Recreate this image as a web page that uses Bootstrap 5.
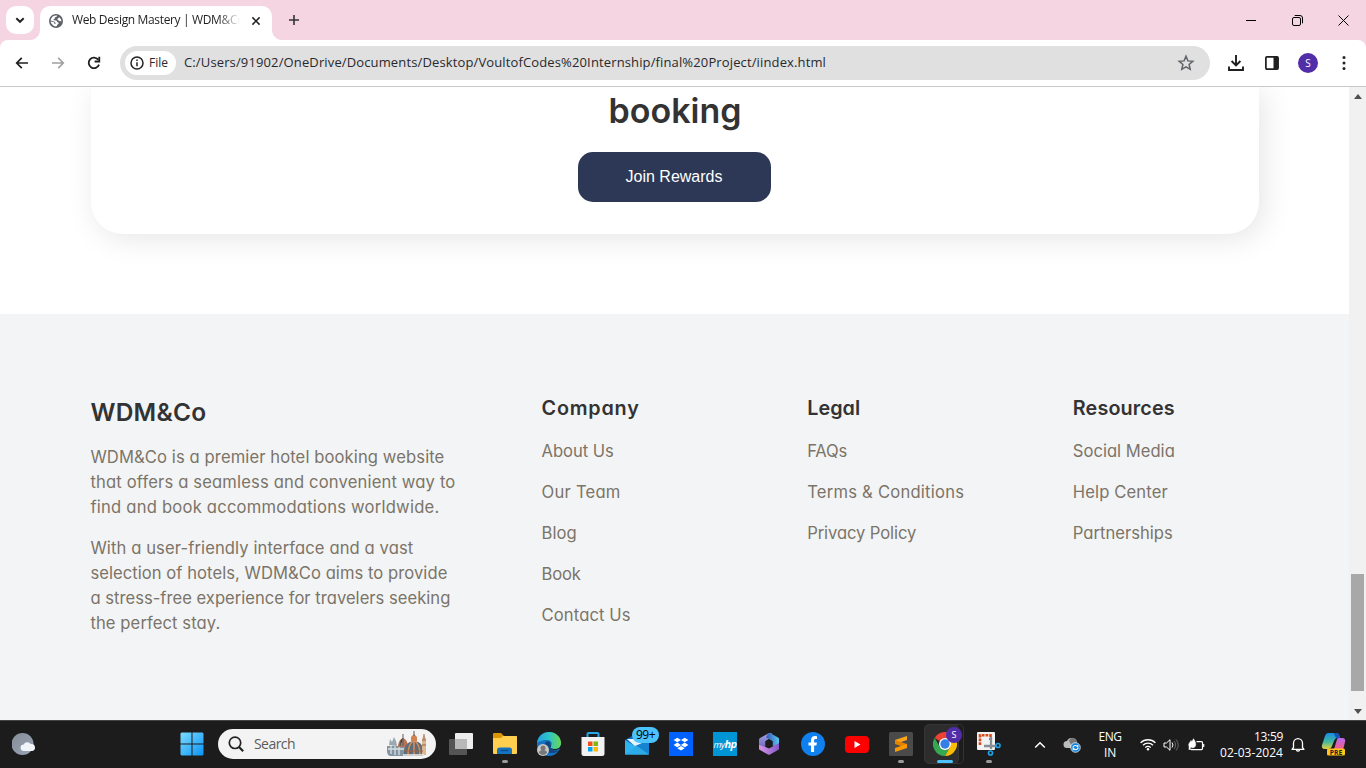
<!DOCTYPE html>
<html lang="en">
<head>
<meta charset="utf-8">
<title>Web Design Mastery | WDM&amp;Co</title>
<link href="https://cdn.jsdelivr.net/npm/bootstrap@5.3.0/dist/css/bootstrap.min.css" rel="stylesheet">
<style>
  body { width: 1366px; height: 768px; overflow: hidden; background: #fff; color: #1f1f1f; font-family: "Open Sans", "Noto Sans", sans-serif; font-size: 12px; line-height: 1.2; }
  svg { display: block; flex: none; }
  [data-w] { display: inline-block; white-space: nowrap; }

  /* browser chrome */
  .tabstrip { height: 40px; background: #f6d5e3; padding-left: 6px; }
  .tab-search { width: 28px; height: 28px; border-radius: 10px; margin-top: 6px; }
  .browser-tab { position: relative; width: 232px; height: 34px; margin: 6px 0 0 6px; border-radius: 10px 10px 0 0; padding: 0 11px 5px 9px; }
  .browser-tab::before, .browser-tab::after { content: ""; position: absolute; bottom: 0; width: 10px; height: 10px; }
  .browser-tab::before { left: -10px; background: radial-gradient(circle at 0 0, transparent 9.5px, #fff 10.5px); }
  .browser-tab::after { right: -10px; background: radial-gradient(circle at 100% 0, transparent 9.5px, #fff 10.5px); }
  .tab-title { width: 174px; margin-left: 9px; -webkit-mask-image: linear-gradient(90deg, #000 146px, transparent 168px); mask-image: linear-gradient(90deg, #000 146px, transparent 168px); }
  .win-btn { width: 46px; }
  .toolbar-wrap { background: #f6d5e3; }
  .toolbar { height: 47px; border-radius: 8px 8px 0 0; border-bottom: 1px solid #c9c9c9; }
  .tool { width: 36px; height: 46px; }
  .omnibox { height: 34px; width: 1090px; background: #e0e0e0; border-radius: 17px; padding: 0 15px 0 5px; font-size: 13px; color: #28292c; }
  .file-chip { width: 51px; height: 24px; border-radius: 12px; padding-left: 5px; font-size: 12px; }
  .chip-label { margin-left: 5px; }
  .avatar { width: 20px; height: 20px; background: #522da8; font-size: 10px; }

  /* page */
  .viewport { height: 633px; }
  .site { width: 1349px; font-family: "Inter", sans-serif; font-feature-settings: "cv11"; font-size: 16.6px; line-height: 25px; color: #7b7468; overflow: hidden; }
  .rewards { width: 1168px; height: 147px; margin: 0 0 80px 91px; border-radius: 0 0 32px 32px; box-shadow: 5px 5px 30px rgba(0,0,0,.1); }
  .rewards h2 { font-size: 34px; line-height: 48px; font-weight: 600; color: #333; margin: 0 0 17px; }
  .btn-rewards { width: 193px; height: 50px; margin-right: 2px; border-radius: 15px; font-family: "Liberation Sans", Arial, sans-serif; font-size: 16px; background: #2c3855; color: #fff; border: 0; }
  .site-footer { height: 406px; background: #f3f4f6; padding: 80px 90.600px 0 90.400px; }
  .footer-cols { grid-template-columns: 2fr 1fr 1fr 1fr; column-gap: 80px; }
  .site-footer h3 { font-size: 24.500px; line-height: 36px; font-weight: 600; color: #333; margin-bottom: 15px; }
  .site-footer h4 { font-size: 19.800px; line-height: 29px; font-weight: 600; color: #333; margin-bottom: 16px; }
  .site-footer p, .site-footer li { margin-bottom: 16px; }
  .scroller { width: 17px; background: #f1f1f1; padding: 7px 0 6px; }
  .thumb { width: 13px; height: 117px; margin-bottom: 18px; background: #a8a8a8; }
  .arrow { width: 0; border: 4px solid transparent; }
  .arrow-up { border-bottom: 5px solid #505050; border-top: 0; }
  .arrow-down { border-top: 5px solid #505050; border-bottom: 0; }

  /* taskbar */
  .taskbar { height: 48px; background: #1c1c1c; border-top: 1px solid #444; color: #fff; }
  .app { position: relative; width: 44px; height: 47px; padding-bottom: 1px; }
  .search-box { width: 218px; height: 30px; margin: 0 3px 1px 4px; border-radius: 15px; background: #f3f3f3; color: #5c5c5c; font-size: 14px; padding: 0 8px 0 10px; }
  .running::after { content: ""; position: absolute; bottom: 5px; left: 19px; width: 6px; height: 3px; border-radius: 2px; background: #9a9a9a; }
  .active-app::before { content: ""; position: absolute; left: 1px; top: 3px; width: 35px; height: 40px; border-radius: 5px; background: #2d2d2d; border: 1px solid #363636; box-shadow: 5px 0 0 -1px #1c1c1c, 5px 0 0 0 #333; }
  .active-app::after { width: 16px; left: 14px; background: #4cc2ff; }
  .active-app svg { position: relative; }
  .mail-count { position: absolute; left: 17px; top: 6px; width: 27px; height: 16px; border-radius: 8px; background: #4cc2ff; color: #000; font-size: 12px; }
  .profile-dot { position: absolute; left: 23px; top: 6px; width: 16px; height: 16px; border-radius: 50%; background: #522da8; font-size: 9px; }
  .hp-tile { width: 24px; height: 24px; background: #0096d6; font-size: 9px; font-style: italic; letter-spacing: -.5px; }
  .hp-tile b { font-size: 11px; }
  .clock { width: 66px; line-height: 16px; font-size: 12px; }
</style>
</head>
<body class="d-flex flex-column">

<header>
  <div class="tabstrip d-flex">
    <div class="tab-search bg-white d-flex align-items-center justify-content-center">
      <svg width="10" height="8" viewBox="0 0 10 8" fill="none" stroke="#222" stroke-width="1.900"><path d="M1.300 2.200 5 5.800 8.700 2.200"/></svg>
    </div>
    <div class="browser-tab bg-white d-flex align-items-center">
      <svg width="14" height="14" viewBox="0 0 14 14"><circle cx="7" cy="7" r="7" fill="#5f6368"/><path d="M8 1.600c.2 1-.4 1.400-1.300 1.500-1 .1-1 .8-.9 1.400.1.700-1.200.5-1.300 1.300 0 .7.900.5 2.200.6 1.200.1 1.300 1 1.500 1.600.3.700 1.600.3 1.500 1.200-.1 1-1.300.9-1.500 1.700-.1.700-.6 1.500-1.500 1.500C4.600 12.300 2 10 1.600 7.500l2.700.6c1 .2 1.100 1 1 1.600l1.200.3V8.800c-.8-.2-.7-1-1.500-1.200L1.600 6.500C2 3.300 4.500 1.300 8 1.600z" fill="#fff"/><path d="M10 3.200c1.500.8 2.400 2.200 2.400 4-.8.300-1.700.2-2.200-.4-.6-.7-1.900-.6-1.800-1.600.1-.9 1.400-.9 1.600-2z" fill="#fff"/></svg>
      <div class="tab-title"><span data-w="172">Web Design Mastery | WDM&amp;Co</span></div>
      <svg class="ms-auto" width="10" height="10" viewBox="0 0 10 10" stroke="#222" stroke-width="1.500"><path d="M1.400 1.400 8.600 8.600M8.600 1.400 1.400 8.600"/></svg>
    </div>
    <div class="tool d-flex align-items-center justify-content-center ms-1" style="height:40px">
      <svg width="12" height="12" viewBox="0 0 12 12" stroke="#333" stroke-width="1.600"><path d="M6 1v10M1 6h10"/></svg>
    </div>
    <div class="d-flex align-items-center ms-auto">
      <div class="win-btn d-flex justify-content-center"><svg width="10" height="10" stroke="#000"><path d="M0 5.500h10"/></svg></div>
      <div class="win-btn d-flex justify-content-center"><svg width="11" height="11" viewBox="0 0 11 11" fill="none" stroke="#000"><rect x=".5" y="2.500" width="8" height="8" rx="1.500"/><path d="M2.700.5H8a2.500 2.500 0 0 1 2.500 2.500v5.300"/></svg></div>
      <div class="win-btn d-flex justify-content-center"><svg width="11" height="11" viewBox="0 0 11 11" stroke="#000"><path d="M.5.5l10 10M10.500.5l-10 10"/></svg></div>
    </div>
  </div>

  <div class="toolbar-wrap">
    <div class="toolbar bg-white d-flex align-items-center">
      <div class="d-flex ps-1">
        <div class="tool d-flex align-items-center justify-content-center"><svg width="14" height="12" viewBox="0 0 14 12" fill="none" stroke="#1f1f1f" stroke-width="1.700"><path d="M13 6H2M6.800.9 1.700 6l5.100 5.100"/></svg></div>
        <div class="tool d-flex align-items-center justify-content-center"><svg width="14" height="12" viewBox="0 0 14 12" fill="none" stroke="#a0a0a0" stroke-width="1.600"><path d="M1 6h11M7.200.9 12.300 6l-5.100 5.100"/></svg></div>
        <div class="tool d-flex align-items-center justify-content-center"><svg width="14" height="14" viewBox="0 0 14 14" fill="none" stroke="#1f1f1f" stroke-width="1.800"><path d="M12 8.600A5.300 5.300 0 1 1 11.200 3.600M12.300.8v4.700H7.600"/></svg></div>
      </div>
      <div class="omnibox d-flex align-items-center ms-2">
        <div class="file-chip bg-white d-flex align-items-center">
          <svg width="14" height="14" viewBox="0 0 14 14" fill="none" stroke="#222" stroke-width="1.500"><circle cx="7" cy="7" r="6"/><path d="M7 6.200v4M7 3.500v1.500"/></svg>
          <span class="chip-label"><span data-w="19">File</span></span>
        </div>
        <span class="ms-2"><span data-w="642">C:/Users/91902/OneDrive/Documents/Desktop/VoultofCodes%20Internship/final%20Project/iindex.html</span></span>
        <svg class="ms-auto" width="18" height="18" viewBox="0 0 18 18" fill="none" stroke="#5f6368" stroke-width="1.500"><path d="M9 2.300l1.900 4.600 4.900.4-3.700 3.200 1.100 4.800L9 12.800l-4.200 2.500 1.100-4.800-3.700-3.200 4.900-.4z"/></svg>
      </div>
      <div class="d-flex align-items-center ms-2">
        <div class="tool d-flex align-items-center justify-content-center"><svg width="16" height="16" viewBox="0 0 16 16" fill="none" stroke="#1f1f1f" stroke-width="1.900"><path d="M8 0v10M3.600 6 8 10.400 12.400 6M1 11.500V15h14v-3.500"/></svg></div>
        <div class="tool d-flex align-items-center justify-content-center"><svg width="14" height="14" viewBox="0 0 14 14"><rect x=".9" y=".9" width="12.200" height="12.200" rx="1" fill="none" stroke="#1f1f1f" stroke-width="1.700"/><path d="M8.500 1h4.500v12H8.500z" fill="#1f1f1f"/></svg></div>
        <div class="tool d-flex align-items-center justify-content-center"><div class="avatar rounded-circle text-white d-flex align-items-center justify-content-center">S</div></div>
        <div class="tool d-flex align-items-center justify-content-center"><svg width="4" height="14" viewBox="0 0 4 14" fill="#222"><circle cx="2" cy="1.600" r="1.500"/><circle cx="2" cy="7" r="1.500"/><circle cx="2" cy="12.400" r="1.500"/></svg></div>
      </div>
    </div>
  </div>
</header>

<div class="viewport d-flex">
  <main class="site">
    <section class="rewards text-center">
      <h2><span data-w="133">booking</span></h2>
      <button class="btn btn-rewards" type="button"><span data-w="97">Join Rewards</span></button>
    </section>
    <footer class="site-footer">
      <div class="footer-cols d-grid">
        <div>
          <h3><span data-w="116">WDM&amp;Co</span></h3>
          <p><span data-w="354">WDM&amp;Co is a premier hotel booking website</span><br><span data-w="365">that offers a seamless and convenient way to</span><br><span data-w="349">find and book accommodations worldwide.</span></p>
          <p><span data-w="323">With a user-friendly interface and a vast</span><br><span data-w="357">selection of hotels, WDM&amp;Co aims to provide</span><br><span data-w="360">a stress-free experience for travelers seeking</span><br><span data-w="130">the perfect stay.</span></p>
        </div>
        <div>
          <h4><span data-w="98">Company</span></h4>
          <ul class="list-unstyled">
            <li><span data-w="72">About Us</span></li>
            <li><span data-w="79">Our Team</span></li>
            <li><span data-w="35">Blog</span></li>
            <li><span data-w="39">Book</span></li>
            <li><span data-w="89">Contact Us</span></li>
          </ul>
        </div>
        <div>
          <h4><span data-w="53">Legal</span></h4>
          <ul class="list-unstyled">
            <li><span data-w="40">FAQs</span></li>
            <li><span data-w="157">Terms &amp; Conditions</span></li>
            <li><span data-w="109">Privacy Policy</span></li>
          </ul>
        </div>
        <div>
          <h4><span data-w="102">Resources</span></h4>
          <ul class="list-unstyled">
            <li><span data-w="102">Social Media</span></li>
            <li><span data-w="95">Help Center</span></li>
            <li><span data-w="100">Partnerships</span></li>
          </ul>
        </div>
      </div>
    </footer>
  </main>
  <div class="scroller d-flex flex-column align-items-center">
    <div class="arrow arrow-up"></div>
    <div class="thumb mt-auto"></div>
    <div class="arrow arrow-down"></div>
  </div>
</div>

<footer class="taskbar d-flex align-items-center">
  <div class="app d-flex align-items-center ps-2 ms-1">
    <svg width="24" height="24" viewBox="0 0 24 24"><defs><linearGradient id="moon" x2="1" y2="1"><stop stop-color="#858d98"/><stop offset="1" stop-color="#9aa5b4"/></linearGradient></defs><circle cx="10.500" cy="12" r="11" fill="url(#moon)"/><path d="M12 19a3.300 3.300 0 0 1-.3-6.600 4 4 0 0 1 7-.3 3.500 3.500 0 0 1 1.500 6.900z" fill="#f1f5fa"/></svg>
  </div>
  <div class="app d-flex align-items-center justify-content-center" style="margin-left:122px">
    <svg width="24" height="24" viewBox="0 0 24 24"><defs><linearGradient id="win" x2="1" y2="1"><stop stop-color="#7ddcff"/><stop offset="1" stop-color="#0a93f5"/></linearGradient></defs><path fill="url(#win)" d="M1.500.500h10v11h-11v-10zM12.500.500h10l1 1v10h-11zM.5 12.500h11v11h-10l-1-1zM12.500 12.500h11v10l-1 1h-10z"/></svg>
  </div>
  <div class="search-box d-flex align-items-center">
    <svg width="16" height="16" viewBox="0 0 16 16" fill="none" stroke="#222" stroke-width="1.700"><circle cx="7" cy="6.800" r="5.700"/><path d="M11 11l4.200 4.200" stroke-width="2.200"/></svg>
    <span style="margin-left:10px"><span data-w="41">Search</span></span>
    <svg class="ms-auto" width="42" height="26" viewBox="0 0 42 26">
      <path d="M1 15h18v10H5q-4 0-4-5z" fill="#8293a1"/><path d="M3 14l1-6 2 3 2-5 2 4 1 5z" fill="#9ba8b2"/><path d="M2 18h16M5 15v8M9 15v9M13 15v9" stroke="#d7dfe3" stroke-width="1.300"/>
      <path d="M12 16q0-7 5-9 5 2 5 9z" fill="#b77455"/><path d="M17 3v12M14 15q0-6 3-8" stroke="#615c5c"/>
      <path d="M18 25q-1-14 10-15 11 1 9 15z" fill="#626c76"/><path d="M22 24q0-10 5-14M28 10v15M34 24q0-10-5-14" stroke="#d29062" stroke-width="1.500" fill="none"/><path d="M25 10V6l3-3 3 3v4z" fill="#d08350"/><path d="M28 0v5" stroke="#595c61"/>
      <path d="M36 24V8l2-4 2 4v16z" fill="#d9b892"/><path d="M36 9h4M36 14h4M38 3v5M18 20h19" stroke="#9b6544"/><path d="M17 24h21" stroke="#eee" stroke-width="1.500"/>
    </svg>
  </div>

  <div class="app d-flex align-items-center justify-content-center">
    <svg width="24" height="24" viewBox="0 0 24 24"><rect x="6" y="1" width="18" height="16" rx="1" fill="#eee"/><rect x="0" y="7" width="18" height="16" rx="1" fill="#555"/><path d="M6 7h12v10H6z" fill="#b9b9b9"/></svg>
  </div>
  <div class="app running d-flex align-items-center justify-content-center">
    <svg width="24" height="24" viewBox="0 0 24 24"><path d="M0 2q0-1 1-1h7l3 3h12q1 0 1 1v3H0z" fill="#d99506"/><path d="M0 6h8l2-2h13q1 0 1 1v16q0 1-1 1H1q-1 0-1-1z" fill="#ffcf4f"/><path d="M4 22v-4q0-2.500 2.500-2.500h10Q19 15.500 19 18v4z" fill="#1673bd"/><path d="M7.500 18.500h8" stroke="#0b4d8b" stroke-width="1.300"/></svg>
  </div>
  <div class="app d-flex align-items-center justify-content-center">
    <svg width="24" height="24" viewBox="0 0 24 24"><defs><linearGradient id="edgeA"><stop stop-color="#259fe0"/><stop offset=".5" stop-color="#2ec4c8"/><stop offset="1" stop-color="#69d850"/></linearGradient></defs><path d="M12 0a12 12 0 1 0 10 18.500C24 15 24 12 24 11 23 4 18 0 12 0z" fill="#1672c2"/><path d="M0 11C1 4 6 0 12 0c8 0 12 6 12 11 0 4-3 6-6 6-4 0-5-2-4-3 2-3 0-6-4-6-5 0-9 2-10 3z" fill="url(#edgeA)"/><path d="M9.500 9.500C5 13 8 21 15 21c3 0 6-1 7-3-3 1.500-9 0-9-3.500 0-2 1-3 0-4-1-1.500-2.500-1.500-3.500-1z" fill="#124681"/><path d="M13.300 12.500c-.8 3.500 2 5.500 5 5.500 2 0 3.700-.7 5.700-2.500V13c-1 3-3 4-6 4-4 0-5-2-4-3z" fill="#1c1c1c"/><circle cx="6" cy="18" r="6" fill="#c8c8c8"/><circle cx="6" cy="16" r="2.500" fill="#777"/><path d="M2 21q0-3 4-3t4 3q-4 4-8 0z" fill="#777"/></svg>
  </div>
  <div class="app d-flex align-items-center justify-content-center">
    <svg width="24" height="26" viewBox="0 0 24 26"><path d="M6.500 7V3q0-1 1-1h9q1 0 1 1v4" fill="none" stroke="#27a6e8" stroke-width="2"/><path d="M.5 6h23v16.500q0 2.500-2.500 2.500H3Q.5 25 .5 22.500z" fill="#f2f2f2"/><path d="M7 10.500h4.500V15H7z" fill="#f25022"/><path d="M12.500 10.500H17V15h-4.500z" fill="#7fba00"/><path d="M7 16h4.500v4.500H7z" fill="#00a4ef"/><path d="M12.500 16H17v4.500h-4.500z" fill="#ffb900"/></svg>
  </div>
  <div class="app d-flex align-items-center justify-content-center">
    <svg width="24" height="24" viewBox="0 0 24 24"><path d="M0 8 12 1l12 7v14H0z" fill="#1467b5"/><path d="M2 7h20v8l-8 3z" fill="#e8f4fb"/><path d="M0 8l24 14.500H0z" fill="#2eb4f0"/><path d="M24 8v14.500L10 14z" fill="#1683d1"/><path d="M0 22.500 12 14l12 8.500z" fill="#2ea9e8"/></svg>
    <div class="mail-count d-flex align-items-center justify-content-center"><span data-w="19">99+</span></div>
  </div>
  <div class="app d-flex align-items-center justify-content-center">
    <svg width="24" height="24" viewBox="0 0 24 24"><path fill="#0061ff" d="M0 0h24v24H0z"/><path fill="#fff" d="M8.300 5.700 12 8 8.300 10.300 4.600 8zM15.700 5.700 19.400 8l-3.700 2.300L12 8zM8.300 10.600l3.700 2.300-3.700 2.300-3.700-2.300zM15.700 10.600l3.700 2.300-3.700 2.300-3.700-2.300zM12 13.900l3.700 2.300-3.700 2.300-3.700-2.300z"/></svg>
  </div>
  <div class="app d-flex align-items-center justify-content-center"><div class="hp-tile d-flex align-items-center justify-content-center"><span>my<b>hp</b></span></div></div>
  <div class="app d-flex align-items-center justify-content-center">
    <svg width="24" height="24" viewBox="0 0 24 24"><defs><linearGradient id="mA" x2="0" y2="1"><stop stop-color="#a5a4e8"/><stop offset="1" stop-color="#6a62b8"/></linearGradient><linearGradient id="mB"><stop stop-color="#3654b5"/><stop offset="1" stop-color="#57c8f2"/></linearGradient><linearGradient id="mC"><stop stop-color="#d995e6"/><stop offset="1" stop-color="#8458c9"/></linearGradient></defs><path d="M12 1 3 6q-1 .6-1 2v9l6.500-2.500V9L15 5V1.500z" fill="url(#mA)"/><path d="M11 1.500q1.500-1 3 0l7 4q1 .6 1 2v9l-6.500-3V9L9 5.500z" fill="url(#mB)"/><path d="M2 13l6.500 2 3.500 1.500L22 11v5.500q0 1-1 1.600l-8 4.500q-1 .5-2 0l-8-4.500q-1-.6-1-1.600z" fill="url(#mC)"/><path d="M8.500 9.500 12 7.500l3.500 2v4.500L12 16l-3.500-2z" fill="#1c1c1c"/></svg>
  </div>
  <div class="app d-flex align-items-center justify-content-center">
    <svg width="24" height="24" viewBox="0 0 24 24"><circle cx="12" cy="12" r="12" fill="#0f80ee"/><path fill="#fff" d="M10 20v-6.500H7.500v-3H10V8.300C10 5.500 11.500 4 14 4q1.200 0 2 .2v2.700h-1.300c-1.300 0-1.600.7-1.600 1.700v1.900h2.800l-.5 3h-2.300V20z"/></svg>
  </div>
  <div class="app d-flex align-items-center justify-content-center">
    <svg width="24" height="17" viewBox="0 0 24 17"><rect width="24" height="17" rx="4" fill="#f00"/><path d="M9.500 5v7l6-3.500z" fill="#fff"/></svg>
  </div>
  <div class="app running d-flex align-items-center justify-content-center">
    <svg width="24" height="24" viewBox="0 0 24 24"><rect width="24" height="24" rx="1.500" fill="#4a4a4a"/><path d="M6 8 18 4v4L6 12z" fill="#ffa51b"/><path d="M6 8v4l12 4v-4z" fill="#e38400"/><path d="M6 16l12-4v4L6 20z" fill="#ff9800"/></svg>
  </div>
  <div class="app running active-app d-flex align-items-center justify-content-center">
    <svg width="24" height="24" viewBox="0 0 24 24"><path d="M12 12 1.600 6A12 12 0 0 1 22.400 6H12z" fill="#ea4335"/><path d="M1.600 6A12 12 0 0 0 12 24l5.200-9L12 12l-5.200 3z" fill="#34a853"/><path d="M22.400 6A12 12 0 0 1 12 24l5.200-9L12 6z" fill="#fbbc05"/><circle cx="12" cy="12" r="6" fill="#fff"/><circle cx="12" cy="12" r="4.700" fill="#327fe6"/></svg>
    <div class="profile-dot d-flex align-items-center justify-content-center">S</div>
  </div>
  <div class="app running d-flex align-items-center justify-content-center">
    <svg width="26" height="26" viewBox="0 0 26 26"><rect x="1" y="1" width="18" height="18" rx="1" fill="#f2f2f2"/><path d="M4 14V4.300h10.500V9" fill="none" stroke="#d64a1b" stroke-width="2.600" stroke-dasharray="2.800 1"/><path d="M15 6v12M8 15h12" stroke="#888e96" stroke-width="2.300"/><circle cx="22" cy="14.500" r="2" fill="none" stroke="#1ba0e2" stroke-width="1.700"/><circle cx="14.500" cy="22" r="2" fill="none" stroke="#1ba0e2" stroke-width="1.700"/></svg>
  </div>

  <div class="d-flex align-items-center ms-auto">
    <div class="d-flex justify-content-center" style="width:32px"><svg width="12" height="8" viewBox="0 0 12 8" fill="none" stroke="#fff" stroke-width="1.500"><path d="M1.200 6.500 6 1.700l4.800 4.800"/></svg></div>
    <div class="d-flex justify-content-center" style="width:32px"><svg width="18" height="16" viewBox="0 0 18 16"><path d="M4 11a3.500 3.500 0 0 1 0-7 5 5 0 0 1 9.500 1v6z" fill="#bbb"/><path d="M6 4a4 4 0 0 1 8 2l-5 3z" fill="#777"/><circle cx="12.500" cy="10.500" r="4.800" fill="#1482d9" stroke="#fff" stroke-width=".7"/><path d="M9.800 10q2.500-3 5 0v-2M15.200 11.200q-2.500 3-5 0v2" stroke="#fff" fill="none" stroke-width="1.100"/></svg></div>
    <div class="text-center" style="width:44px;line-height:16px"><span data-w="23">ENG</span><br><span data-w="12">IN</span></div>
    <div class="d-flex justify-content-center" style="width:32px"><svg width="16" height="13" viewBox="0 0 16 13" fill="none" stroke="#fff" stroke-width="1.300"><path d="M.6 4.800a10.500 10.500 0 0 1 14.800 0M3 7.300a7 7 0 0 1 10 0M5.300 9.600a3.800 3.800 0 0 1 5.400 0"/><circle cx="8" cy="11.200" r="1.200" fill="#fff" stroke="none"/></svg></div>
    <div class="d-flex justify-content-center" style="width:14px"><svg width="16" height="14" viewBox="0 0 16 14" fill="none" stroke="#fff"><path d="M1 5v4h2.500L7 12.300V1.700L3.500 5z"/><path d="M9 4.500q2 2.500 0 5" /><path d="M11 3q3.300 4 0 8M13 1.500q4.500 5.500 0 11" stroke="#666"/></svg></div>
    <div class="d-flex justify-content-center" style="width:36px"><svg width="17" height="14" viewBox="0 0 17 14" fill="none" stroke="#fff" stroke-width="1.200"><path d="M8.500 3.600h5q1 0 1 1v6q0 1-1 1h-10q-1 0-1-1"/><path d="M15.700 6v3"/><path d="M1 8.500C0 5 2 5 3 2.500l1 1L5.500.7C8.500 5 8.300 8.500 6 9.500q-2 .7-3-.5L1 12z" fill="#fff" stroke-width=".5"/></svg></div>
    <div class="clock text-end" style="margin-left:3px"><span data-w="29">13:59</span><br><span data-w="63">02-03-2024</span></div>
    <div class="d-flex justify-content-center" style="width:30px"><svg width="14" height="16" viewBox="0 0 14 16" fill="none" stroke="#fff" stroke-width="1.300"><path d="M2.500 10.500V6.200a4.500 4.500 0 0 1 9 0v4.300l1.500 1.800H1zM5.300 13q1.700 2.300 3.400 0" stroke-linejoin="round"/></svg></div>
    <div class="d-flex" style="width:45px;margin-left:8px"><svg width="26" height="26" viewBox="0 0 26 26"><defs><linearGradient id="cpA" x2="0" y2="1"><stop stop-color="#168be5"/><stop offset=".55" stop-color="#42b9a0"/><stop offset="1" stop-color="#e4d23e"/></linearGradient><linearGradient id="cpB" x2="0" y2="1"><stop stop-color="#b46bf0"/><stop offset="1" stop-color="#fb5d7c"/></linearGradient></defs><path d="M7 1h9q2 0 3 5h-3q-2 0-3 3l-2 5q-1 3-4 3H4q-4 0-3-4L4 4q1-3 3-3z" fill="url(#cpA)"/><path d="M17 6h4q4 0 3 4l-2 8H11q2 0 3-4l1.500-5q.5-2 1.500-3z" fill="url(#cpB)"/><path d="M12.500 1H16q2 0 3 5h-4z" fill="#1554bc"/><rect x="6" y="16.500" width="18" height="7" rx="1.500" fill="#ffc719"/><text x="15" y="22.500" text-anchor="middle" font-family="Open Sans, sans-serif" font-size="6.800" font-weight="700" fill="#222">PRE</text></svg></div>
  </div>
</footer>

<script src="https://cdn.jsdelivr.net/npm/bootstrap@5.3.0/dist/js/bootstrap.bundle.min.js"></script>
<script>
  // Track each label so that it fills its set measure (data-w, in px)
  document.querySelectorAll('[data-w]').forEach(function (el) {
    var gap = (el.dataset.w - el.getBoundingClientRect().width) / el.textContent.length;
    el.style.letterSpacing = gap.toFixed(3) + 'px';
  });
</script>
</body>
</html>
